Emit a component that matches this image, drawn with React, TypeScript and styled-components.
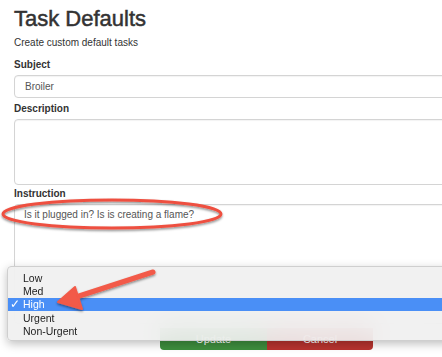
import React from 'react'
import styled, { createGlobalStyle } from 'styled-components'

const GlobalStyle = createGlobalStyle`
  html, body {
    margin: 0;
    padding: 0;
    background: #fff;
    overflow: hidden;
  }
  body {
    font-family: "Liberation Sans", Arial, sans-serif;
    color: #333;
  }
`

const priorities = ['Low', 'Med', 'High', 'Urgent', 'Non-Urgent']

const App = () => {
  return (
    <>
      <GlobalStyle />
      <Page>
        <Title>Task Defaults</Title>
        <Subtitle>Create custom default tasks</Subtitle>
        <Label $gap={8}>Subject</Label>
        <Input>Broiler</Input>
        <Label $gap={4}>Description</Label>
        <TextArea $height={66} />
        <Label $gap={2}>Instruction</Label>
        <TextArea $height={120}>Is it plugged in? Is is creating a flame?</TextArea>
        <Btns>
          <Button $color="#3e8e3e">Update</Button>
          <Button $color="#b8332f">Cancel</Button>
        </Btns>

        <Menu>
          {priorities.map(p => (
            <MenuItem key={p} $active={p === 'High'}>
              <Check>{p === 'High' ? '✓' : ''}</Check>
              {p}
            </MenuItem>
          ))}
        </Menu>

        <Annotation width="442" height="357" viewBox="0 0 442 357">
          <defs>
            <filter id="shadow" x="-20%" y="-50%" width="140%" height="200%">
              <feDropShadow dx="0" dy="1.5" stdDeviation="1.2" floodColor="#000" floodOpacity="0.45" />
            </filter>
          </defs>
          <ellipse cx="112" cy="214" rx="109" ry="14" fill="none" stroke="#ee5040" strokeWidth="3" filter="url(#shadow)" />
          <g filter="url(#shadow)">
            <line x1="153" y1="272" x2="76" y2="297" stroke="#f25a48" strokeWidth="5" strokeLinecap="round" />
            <polygon points="58,302 75,287 82,309" fill="#f25a48" stroke="#f25a48" strokeWidth="2" strokeLinejoin="round" />
          </g>
        </Annotation>
      </Page>
    </>
  )
}

export default App

const Page = styled.div`
  position: relative;
  width: 442px;
  height: 357px;
  overflow: hidden;
  box-sizing: border-box;
  padding: 3px 0 0 14px;
`
const Title = styled.h1`
  margin: 0;
  font-size: 22px;
  line-height: 32px;
  font-weight: 500;
  color: #333;
  -webkit-text-stroke: 0.5px #333;
`
const Subtitle = styled.p`
  margin: 1px 0 0;
  font-size: 10px;
  line-height: 14px;
  color: #333;
`
const Label = styled.div<{ $gap: number }>`
  margin-top: ${p => p.$gap}px;
  margin-bottom: 3px;
  font-size: 10px;
  line-height: 14px;
  font-weight: bold;
  color: #333;
`
const Input = styled.div`
  box-sizing: border-box;
  width: 470px;
  height: 23px;
  border: 1px solid #d4d4d4;
  border-radius: 4px;
  padding: 0 10px;
  font-size: 10px;
  line-height: 21px;
  color: #555;
  box-shadow: inset 0 1px 1px rgba(0, 0, 0, 0.05);
`
const TextArea = styled.div<{ $height: number }>`
  box-sizing: border-box;
  width: 470px;
  height: ${p => p.$height}px;
  border: 1px solid #d4d4d4;
  border-radius: 4px;
  padding: 3px 9px;
  font-size: 10px;
  line-height: 14px;
  color: #555;
  box-shadow: inset 0 1px 1px rgba(0, 0, 0, 0.05);
`
const Btns = styled.div`
  display: flex;
  margin-top: 4px;
  padding-left: 146px;
`
const Button = styled.div<{ $color: string }>`
  width: 107px;
  height: 22px;
  background: ${p => p.$color};
  color: #fff;
  font-size: 11px;
  line-height: 22px;
  text-align: center;
  &:first-child {
    border-radius: 0 0 0 4px;
  }
  &:last-child {
    border-radius: 0 0 4px 0;
    width: 106px;
  }
`
const Menu = styled.div`
  position: absolute;
  left: 7px;
  top: 266px;
  width: 460px;
  box-sizing: border-box;
  padding: 4px 0 3px;
  background: rgba(239, 239, 239, 0.9);
  backdrop-filter: blur(14px);
  border: 1px solid #cfcfcf;
  border-radius: 4px 0 0 4px;
  box-shadow: 0 3px 10px rgba(0, 0, 0, 0.25);
`
const MenuItem = styled.div<{ $active: boolean }>`
  display: flex;
  align-items: center;
  height: 13.3px;
  font-size: 10.5px;
  color: ${p => (p.$active ? '#fff' : '#222')};
  background: ${p => (p.$active ? '#4a8ff6' : 'transparent')};
`
const Check = styled.span`
  width: 15px;
  padding-left: 2px;
  box-sizing: border-box;
  font-size: 11.5px;
`
const Annotation = styled.svg`
  position: absolute;
  left: 0;
  top: 0;
  pointer-events: none;
`
